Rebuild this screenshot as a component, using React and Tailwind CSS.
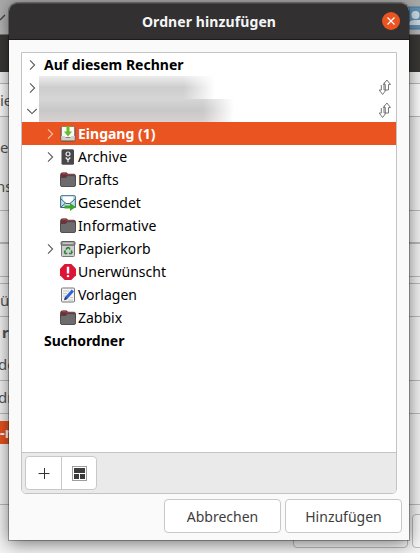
import React from "react";

const FolderIcon = () => (
  <svg width="16" height="16" viewBox="0 0 16 16">
    <path d="M.5 3Q.5 .8 2.5 .8H6.5L8 2.2H14Q15.500 2.200 15.500 4V8H.5Z" fill="#713039" stroke="#4a3437" strokeWidth=".7" />
    <path d="M2 1.700H6L7.500 3.200H14.500" fill="none" stroke="#b8434b" />
    <path d="M.5 5.500H5.700L7.500 3.700H14Q15.500 3.700 15.500 5V13Q15.500 14.500 14 14.500H2Q.5 14.500 .5 13Z" fill="#6d6b6b" stroke="#474545" strokeWidth=".9" />
  </svg>
);

const InboxIcon = () => (
  <svg width="16" height="16" viewBox="0 0 16 16">
    <rect x=".6" y=".6" width="14.800" height="14.800" rx="1.500" fill="#55504d" />
    <rect x="1.700" y=".8" width="12.600" height="10.500" fill="#f8f8f5" />
    <path d="M1.200 10H4.500L6 12H10L11.500 10H14.800V14.500H1.200Z" fill="#d3d1cd" />
    <path d="M6.500 0H9.500V5.500H12L8 10.500L4 5.500H6.500Z" fill="#65bd2c" />
  </svg>
);

const ArchiveIcon = () => (
  <svg width="16" height="16" viewBox="0 0 16 16">
    <rect x="1.500" y=".3" width="12.500" height="15.400" rx="1.500" fill="#484848" />
    <circle cx="8" cy="5" r="2" fill="none" stroke="#eee" strokeWidth="1.200" />
    <path d="M5.700 8.500L8 11L10.300 8.500M8 11V13.300" fill="none" stroke="#eee" strokeWidth="1.200" />
  </svg>
);

const SentIcon = () => (
  <svg width="16" height="16" viewBox="0 0 16 16">
    <path d="M.6 1.500Q.6 .7 1.500 .7H14.500Q15.400 .7 15.400 1.500V12.500H.6Z" fill="#b8e1ef" stroke="#40677a" />
    <path d="M3 1.500H13V6L9.500 8.500H6L3 6Z" fill="#fff" />
    <path d="M1 4L6 8.500H10L15 4M1 12L5.500 8" fill="none" stroke="#416778" />
    <path d="M4.500 10.500H10V8L15.800 12L10 15.900V13.400H4.500Z" fill="#40a629" />
  </svg>
);

const TrashIcon = () => (
  <svg width="16" height="16" viewBox="0 0 16 16">
    <path d="M1.500 3V14.500Q1.500 15.500 2.500 15.500H13.500Q14.500 15.500 14.500 14.500V3" fill="#cecece" stroke="#777" />
    <rect x="1" y=".5" width="14" height="3.700" rx="1.200" fill="#969696" stroke="#616161" />
    <path d="M3 2.200H13" stroke="#ddd" />
    <path d="M6 8.500L7.300 6.700H9L10 8.500M11.300 9.500L12 11.300L11 12.600H9M7.300 12.600H5.200L4.500 11L5.500 9.300" fill="none" stroke="#278236" strokeWidth="1.500" />
  </svg>
);

const JunkIcon = () => (
  <svg width="16" height="16" viewBox="0 0 16 16">
    <path d="M4.700 0H11.300L16 4.700V11.300L11.300 16H4.700L0 11.300V4.700Z" fill="#dc1536" />
    <path d="M6.800 2.800H9.200V9.400H6.800Z" fill="#fff" />
    <rect x="6.800" y="10.900" width="2.400" height="2.300" rx=".8" fill="#fff" />
  </svg>
);

const TemplateIcon = () => (
  <svg width="16" height="16" viewBox="0 0 16 16">
    <rect x="1.500" y="1" width="13" height="14" rx="1" fill="#f4f4f2" stroke="#777" />
    <path d="M3 4H9M3 6.500H7M3 9H6M8 13H13M10 10.500H13" stroke="#c6c6c6" />
    <path d="M5 10L11.700 2.500L14 4.500L7.300 12L4.500 13Z" fill="#2c61dc" />
    <path d="M5 10L7.300 12L4 13.200Z" fill="#343434" />
  </svg>
);

const Chevron = ({ open, light }) => (
  <svg className="shrink-0" width="12" height="12" viewBox="0 0 12 12" fill="none" stroke={light ? "#f9c3ac" : "#5b5b5b"} strokeWidth="1.100">
    {open ? <path d="M1.300 4L6 8.600L10.700 4" /> : <path d="M4 1.300L8.600 6L4 10.700" />}
  </svg>
);

const SyncIcon = () => (
  <svg width="14" height="17" viewBox="0 0 14 17" fill="#fff" stroke="#777" strokeWidth="1">
    <path d="M3.300 6V11H1.200L4.600 15.500L8 11H6V6" />
    <path d="M7.300 11V5.500H5.300L8.900 1L12.500 5.500H10.500V11Z" />
    <path d="M6.300 6V3.500" />
  </svg>
);

const folders = [
  { name: "Archive", icon: ArchiveIcon, chevron: true, track: "tracking-[0.12px]" },
  { name: "Drafts", icon: FolderIcon, track: "tracking-[0.12px]" },
  { name: "Gesendet", icon: SentIcon, track: "tracking-[0px]" },
  { name: "Informative", icon: FolderIcon, track: "tracking-[0.12px]" },
  { name: "Papierkorb", icon: TrashIcon, chevron: true, track: "tracking-[0px]" },
  { name: "Unerwünscht", icon: JunkIcon, track: "tracking-[0px]" },
  { name: "Vorlagen", icon: TemplateIcon, track: "tracking-[0px]" },
  { name: "Zabbix", icon: FolderIcon, track: "tracking-[0px]" },
];

function Backdrop() {
  return (
    <div className="flex h-full flex-col bg-[#f4f4f4] text-[15px] text-[#555]">
      <div className="flex h-[35px] shrink-0 items-start justify-between border-b border-[#777] bg-gradient-to-b from-[#aaa] to-[#bcbcbc]">
        <svg className="mt-3" width="8" height="12" viewBox="0 0 8 12"><path d="M0 8L5 3" stroke="#444" strokeWidth="1.300" /></svg>
        <svg className="mt-[6px]" width="16" height="24" viewBox="0 0 16 24">
          <rect x="1" y="1" width="20" height="22" rx="5" fill="#6292b5" stroke="#497a9d" />
          <circle cx="11.500" cy="9" r="4" fill="#d1dce5" />
          <path d="M5 18Q5 14 11.500 14H16V19H5Z" fill="#d1dce5" />
          <rect y="15" width="5" height="6" rx="1" fill="#67406a" />
        </svg>
      </div>
      <div className="h-[37px] shrink-0 bg-[#3b3936]" />
      <div className="h-[12px] shrink-0 border-b border-[#bbb]" />
      <div className="flex h-[33px] shrink-0 items-center border-b border-[#bbb] bg-white">ie</div>
      <div className="flex h-[60px] shrink-0 items-center whitespace-pre">e d</div>
      <div className="flex h-[33px] shrink-0 items-start pt-0"><span className="-ml-1 -mt-0.5">nse</span></div>
      <div className="h-[34px] shrink-0 border-b-2 border-t border-[#bbb]" />
      <div className="h-[33px] shrink-0 border-b border-[#bbb]" />
      <div className="h-[7px] shrink-0 border-b border-[#bbb]" />
      <div className="flex h-[33px] shrink-0 items-center border-b border-[#bbb]">ü</div>
      <div className="flex h-[31px] shrink-0 items-center pl-[2px] font-bold">re</div>
      <div className="flex h-[33px] shrink-0 items-center border-b border-[#bbb]"><span className="-ml-0.5">de</span></div>
      <div className="flex h-[33px] shrink-0 items-center border-b border-[#bbb]"><span className="-ml-0.5">dr</span></div>
      <div className="h-[7px] shrink-0" />
      <div className="flex h-[23px] w-[60px] shrink-0 items-center bg-[#e95420] font-bold text-white">-n</div>
      <div className="h-[61px] shrink-0 border-b border-[#bbb]" />
      <div className="flex h-[43px] shrink-0 gap-1 pl-[293px] pt-[9px]">
        <div className="h-[34px] w-[115px] shrink-0 rounded border border-[#bbb] bg-[#f8f8f8]" />
        <div className="h-[34px] w-[115px] shrink-0 rounded border border-[#bbb] bg-[#f8f8f8]" />
      </div>
    </div>
  );
}

function Account({ open }) {
  return (
    <div className="flex h-[23px] items-center pl-1">
      <Chevron open={open} />
      {open ? (
        <div className="ml-px h-[23px] w-[195px] bg-gradient-to-b from-[#d6d6d6] via-[#c9c7c7] to-[#d8d2d1] [mask-image:linear-gradient(to_right,black_84%,transparent)]" />
      ) : (
        <div className="ml-px h-[23px] w-[176px] bg-gradient-to-b from-[#ededed] via-[#cdcdcd] to-[#d6d6d6] [mask-image:linear-gradient(to_right,black_82%,transparent)]" />
      )}
      <div className="ml-auto mr-[4px]"><SyncIcon /></div>
    </div>
  );
}

export default function App() {
  return (
    <div className="relative h-[553px] w-[420px] overflow-hidden font-['Noto_Sans','Open_Sans',sans-serif]">
      <Backdrop />
      <div className="absolute left-[9px] top-[3px] flex h-[537px] w-[400px] flex-col rounded-t-[8px] bg-[#fafafa] shadow-[0_0_0_1px_rgba(0,0,0,0.3),0_3px_18px_rgba(0,0,0,0.55)]">
        <div className="relative flex h-[37px] shrink-0 items-center justify-center rounded-t-[8px] border-b border-t border-b-[#1c1b1b] border-t-[#484647] bg-[#323031] pl-[0px] text-[14px] font-bold text-[#f5f5f5]">
          <span className="tracking-[0.1px]">Ordner hinzufügen</span>
          <div className="absolute right-[9px] top-[8px] flex size-[18px] items-center justify-center rounded-full bg-[#e95420]">
            <svg width="10" height="10" viewBox="0 0 10 10" stroke="#fff" strokeWidth="1.200"><path d="M1.500 1.500L8.500 8.500M8.500 1.500L1.500 8.500" /></svg>
          </div>
        </div>
        <div className="ml-3 mt-3 flex h-[442px] w-[376px] shrink-0 flex-col overflow-hidden rounded-b-[5px] border border-[#c4c4c4] bg-white text-[14px] text-black">
          <div className="flex h-[23px] shrink-0 items-center pl-1 font-bold"><Chevron /><span className="ml-[6px] tracking-[0px]">Auf diesem Rechner</span></div>
          <Account />
          <Account open />
          <div className="flex h-[23px] items-center bg-[#e95420] pl-[22px] font-bold text-white">
            <Chevron light /><span className="ml-1"><InboxIcon /></span><span className="ml-[2px] tracking-[0px]">Eingang (1)</span>
          </div>
          {folders.map(({ name, icon: Icon, chevron, track }) => (
            <div key={name} className="flex h-[23px] items-center pl-[22px]">
              {chevron ? <Chevron /> : <span className="w-3" />}
              <span className="ml-1"><Icon /></span>
              <span className={"ml-[2px] " + track}>{name}</span>
            </div>
          ))}
          <div className="flex h-[23px] items-center pl-[22px] font-bold"><span className="tracking-[0px]">Suchordner</span></div>
          <div className="mt-auto h-[41px] shrink-0 border-t border-[#c4c4c4] bg-[#eaeaea] pl-[3px] pt-[3px]">
            <div className="flex h-[34px] w-[72px] rounded-[4px] border border-[#c8c8c8] bg-white">
              <div className="flex w-[36px] items-center justify-center border-r border-[#c8c8c8]">
                <svg width="12" height="12" viewBox="0 0 12 12" stroke="#333"><path d="M.5 6.500H11.500M6.500 1V12" /></svg>
              </div>
              <div className="flex flex-1 items-center justify-center">
                <svg width="15" height="15" viewBox="0 0 15 15" fill="#3b3b3b">
                  <rect x=".5" y=".5" width="14" height="14" fill="none" stroke="#3b3b3b" strokeDasharray="1 1" />
                  <rect x="2" y="2" width="11" height="5" />
                  <rect x="2" y="8" width="5" height="5" />
                  <rect x="8" y="8" width="5" height="5" />
                </svg>
              </div>
            </div>
          </div>
        </div>
        <div className="mr-[7px] mt-[5px] flex justify-end gap-1 text-[14px] text-[#3d3d3d]">
          <button className="h-[34px] w-[117px] rounded-[4px] border border-[#c8c8c8] bg-white"><span>Abbrechen</span></button>
          <button className="h-[34px] w-[117px] rounded-[4px] border border-[#c8c8c8] bg-white"><span>Hinzufügen</span></button>
        </div>
      </div>
    </div>
  );
}
